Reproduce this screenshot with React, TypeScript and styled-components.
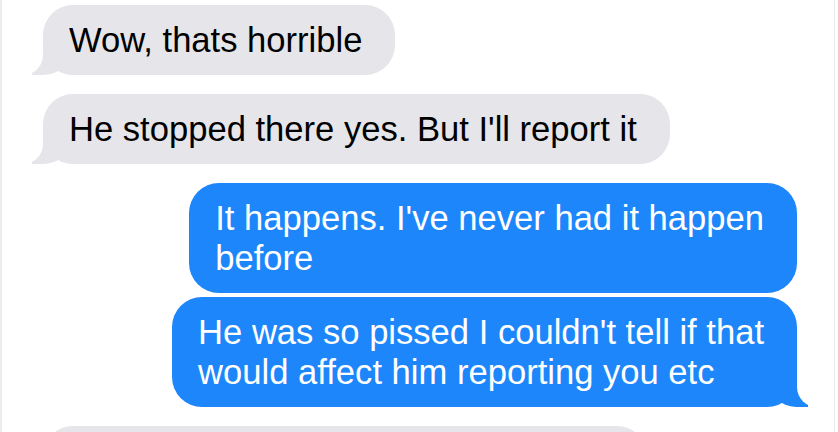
import styled, { createGlobalStyle, css } from "styled-components";

type Side = "them" | "me";

type Message = {
  side: Side;
  lines: string[];
  tail?: boolean;
  grouped?: boolean;
  width?: number;
};

const messages: Message[] = [
  { side: "them", lines: ["Wow, thats horrible"], tail: true },
  { side: "them", lines: ["He stopped there yes. But I'll report it"], tail: true },
  { side: "me", lines: ["It happens. I've never had it happen", "before"] },
  {
    side: "me",
    lines: ["He was so pissed I couldn't tell if that", "would affect him reporting you etc"],
    tail: true,
    grouped: true,
  },
  { side: "them", lines: ["\u00a0"], width: 604 },
];

const GlobalStyle = createGlobalStyle`
  html, body {
    margin: 0;
    padding: 0;
    overflow: hidden;
    background: #fff;
  }
  body {
    font-family: "Liberation Sans", Arial, sans-serif;
  }
`;

const Frame = styled.div`
  box-sizing: border-box;
  width: 835px;
  height: 432px;
  overflow: hidden;
  background: #fff;
  border-left: 2px solid #ececee;
  border-right: 1px solid #ececee;
`;

const Thread = styled.div`
  display: flex;
  flex-direction: column;
  padding: 5px 37px 0 41px;
`;

const GRAY = "#e5e5ea";
const BLUE = "#1c86fa";

const themTail = css`
  &::before {
    left: -11px;
    border-bottom-right-radius: 28px;
  }
  &::after {
    left: -40px;
    border-bottom-right-radius: 20px;
  }
`;

const meTail = css`
  &::before {
    right: -11px;
    border-bottom-left-radius: 28px;
  }
  &::after {
    right: -40px;
    border-bottom-left-radius: 20px;
  }
`;

const Bubble = styled.div<{ $side: Side; $tail?: boolean; $grouped?: boolean; $width?: number }>`
  position: relative;
  isolation: isolate;
  box-sizing: border-box;
  align-self: ${(p) => (p.$side === "me" ? "flex-end" : "flex-start")};
  width: ${(p) => (p.$width ? `${p.$width}px` : "auto")};
  margin-top: ${(p) => (p.$grouped ? 4 : 19)}px;
  padding: 15px 33px 15px 26px;
  border-radius: 30px;
  background: ${(p) => (p.$side === "me" ? BLUE : GRAY)};
  color: ${(p) => (p.$side === "me" ? "#fff" : "#000")};
  font-size: 34.6px;
  line-height: 40px;

  &:first-child {
    margin-top: 0;
  }

  ${(p) =>
    p.$tail &&
    css`
      &::before,
      &::after {
        content: "";
        position: absolute;
        bottom: 0;
        z-index: -1;
        height: 34px;
        width: 40px;
      }
      &::before {
        background: ${p.$side === "me" ? BLUE : GRAY};
      }
      &::after {
        background: #fff;
      }
      ${p.$side === "me" ? meTail : themTail}
    `}
`;

const Line = styled.span`
  display: block;
  white-space: nowrap;
`;

export default function App() {
  return (
    <>
      <GlobalStyle />
      <Frame>
        <Thread>
          {messages.map((m, i) => (
            <Bubble key={i} $side={m.side} $tail={m.tail} $grouped={m.grouped} $width={m.width}>
              {m.lines.map((l, j) => (
                <Line key={j}>{l}</Line>
              ))}
            </Bubble>
          ))}
        </Thread>
      </Frame>
    </>
  );
}
